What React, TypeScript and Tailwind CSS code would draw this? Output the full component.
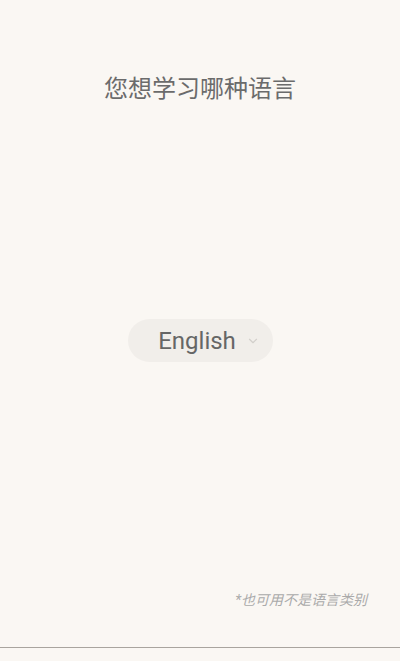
import { ChevronDown } from "lucide-react";

export default function App() {
  return (
    <div
      className="w-full h-[661px] bg-[#faf7f3] flex flex-col overflow-hidden"
      style={{ fontFamily: "Roboto, 'Noto Sans CJK SC', sans-serif" }}
    >
      {/* Question */}
      <h1 className="pt-[74px] text-center text-[24px] leading-[30px] text-[#6b6b6b] font-normal">
        您想学习哪种语言
      </h1>

      {/* Language picker */}
      <div className="mt-[215px] flex justify-center">
        <button className="h-[43px] w-[145px] rounded-full bg-[#f1eeea] flex items-center justify-center gap-[10px] pl-[18px]">
          <span className="text-[24px] leading-none text-[#666]">English</span>
          <ChevronDown className="h-[14px] w-[14px] text-[#d2cfcb]" strokeWidth={2} />
        </button>
      </div>

      {/* Hint */}
      <p className="mt-[229px] pr-[33px] text-right text-[14px] leading-[18px] italic text-[#aaa]">
        *也可用不是语言类别
      </p>

      <div className="mt-[38px] border-t border-[#a9a49e]" />
    </div>
  );
}
